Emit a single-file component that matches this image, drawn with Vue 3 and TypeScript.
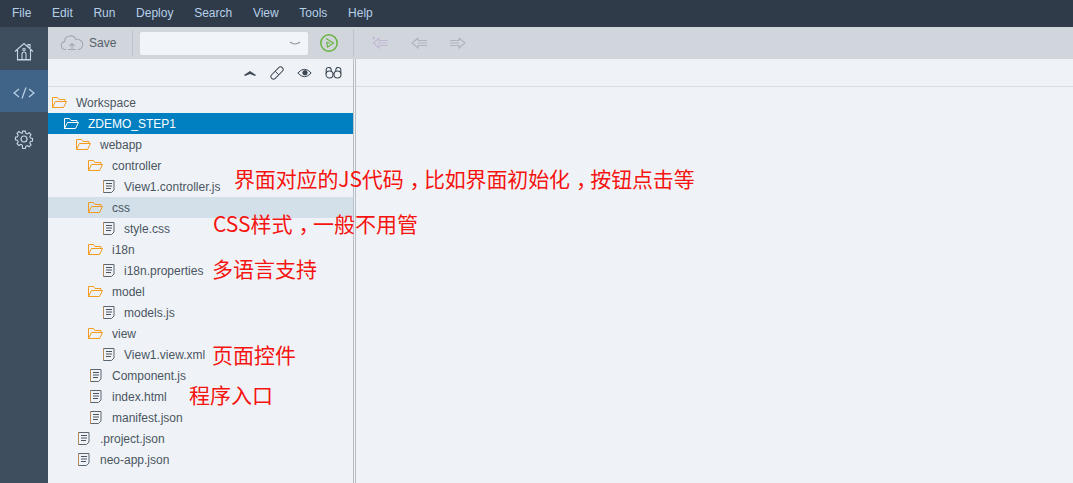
<script setup lang="ts">
interface Row { name: string; depth: number; folder: boolean; cls?: string }
interface Note { parts: string[]; x: number; y: number; cls?: string }
const menus: string[] = ['File', 'Edit', 'Run', 'Deploy', 'Search', 'View', 'Tools', 'Help']
const rows: Row[] = [
  { name: 'Workspace', depth: 0, folder: true },
  { name: 'ZDEMO_STEP1', depth: 1, folder: true, cls: 'selected' },
  { name: 'webapp', depth: 2, folder: true },
  { name: 'controller', depth: 3, folder: true },
  { name: 'View1.controller.js', depth: 4, folder: false },
  { name: 'css', depth: 3, folder: true, cls: 'hover' },
  { name: 'style.css', depth: 4, folder: false },
  { name: 'i18n', depth: 3, folder: true },
  { name: 'i18n.properties', depth: 4, folder: false },
  { name: 'model', depth: 3, folder: true },
  { name: 'models.js', depth: 4, folder: false },
  { name: 'view', depth: 3, folder: true },
  { name: 'View1.view.xml', depth: 4, folder: false },
  { name: 'Component.js', depth: 3, folder: false },
  { name: 'index.html', depth: 3, folder: false },
  { name: 'manifest.json', depth: 3, folder: false },
  { name: '.project.json', depth: 2, folder: false },
  { name: 'neo-app.json', depth: 2, folder: false },
]
const notes: Note[] = [
  { parts: ['界面对应的JS代码', '，', '比如界面初始化', '，', '按钮点击等'], x: 234, y: 164, cls: 'tight' },
  { parts: ['CSS样式', '，', '一般不用管'], x: 213, y: 209 },
  { parts: ['多语言支持'], x: 212, y: 254 },
  { parts: ['页面控件'], x: 212, y: 340 },
  { parts: ['程序入口'], x: 189, y: 380 },
]
</script>

<template>
  <div class="app">
    <header class="menubar">
      <span v-for="m in menus" :key="m" class="menu">{{ m }}</span>
    </header>
    <div class="body">
      <nav class="rail">
        <div class="rail-item home">
          <svg width="20" height="19" viewBox="0 0 20 19" fill="none" stroke="#c4d6e8" stroke-width="1.100">
            <path d="M1 9.500 10 1.500l9 8M14 5V2.500h2V7M3.500 8v10h13V8M3 17.500h14" />
            <path d="M8 17.500v-5.500a2 2 0 0 1 4 0v5.500" />
            <circle cx="10" cy="7.500" r="1.200" />
          </svg>
        </div>
        <div class="rail-item active">
          <svg width="22" height="12" viewBox="0 0 22 12" fill="none" stroke="#bcd3e8" stroke-width="1.200">
            <path d="M6 2 1 6l5 4M16 2l5 4-5 4M13 .5 9 11.500" />
          </svg>
        </div>
        <div class="rail-item gear">
          <svg width="20" height="20" viewBox="0 0 20 20" fill="none" stroke="#c4d6e8" stroke-width="1.200">
            <path d="M8.500 1.500h3l.5 2.400 1.700.7 2-1.300 2.100 2.100-1.300 2 .7 1.700 2.300.5v3l-2.300.5-.7 1.700 1.300 2-2.100 2.100-2-1.300-1.700.7-.5 2.400h-3L8 16.900l-1.700-.7-2 1.300-2.100-2.100 1.300-2-.7-1.700L.5 11.200v-3l2.300-.5.7-1.700-1.300-2 2.100-2.100 2 1.300L8 3.900z" transform="translate(1 .8) scale(.9)" />
            <circle cx="10" cy="10" r="3" />
          </svg>
        </div>
      </nav>
      <div class="main">
        <div class="toolbar">
          <div class="save">
            <svg width="24" height="16" viewBox="0 0 24 16" fill="none" stroke="#a3a9b0" stroke-width="1.100">
              <path d="M6 14.500H5a4 4 0 0 1-.5-7.900A6 6 0 0 1 16 4.500a4.500 4.500 0 0 1 3 10h-1M12 15V8.500M9.500 11 12 8.500l2.500 2.500M8 14.500h8" />
            </svg>
            <span>Save</span>
          </div>
          <div class="select">
            <svg width="12" height="5" viewBox="0 0 12 5" fill="none" stroke="#8c939a" stroke-width="1.100"><path d="M1 1q5 4 10 0" /></svg>
          </div>
          <svg class="run" width="20" height="20" viewBox="0 0 20 20" fill="none">
            <circle cx="10" cy="10" r="8.200" stroke="#6ab23f" stroke-width="1.500" />
            <path d="M7 5.500 14.500 10 8.500 14 7.800 9.500l3 .5" stroke="#6ab23f" stroke-width="1.100" />
          </svg>
          <div class="navs">
            <svg width="18" height="14" viewBox="0 0 18 14" fill="none" stroke="#c2b8d6" stroke-width="1.100">
              <path d="M8 2 2.500 7 8 12V9.500h9M8 2v2.500h9M7 7h9" /><path d="M1 2h3M2.500.5v3" />
            </svg>
            <svg width="18" height="14" viewBox="0 0 18 14" fill="none" stroke="#aeb5bd" stroke-width="1.100">
              <path d="M8 2 2 7l6 5V9.500h9M8 2v2.500h9M8 7h9" />
            </svg>
            <svg width="18" height="14" viewBox="0 0 18 14" fill="none" stroke="#aeb5bd" stroke-width="1.100">
              <path d="M10 2l6 5-6 5V9.500H1M10 2v2.500H1M1 7h9" />
            </svg>
          </div>
        </div>
        <div class="panes">
          <aside class="left">
            <div class="pane-head">
              <svg width="14" height="8" viewBox="0 0 14 8" fill="#3c4753"><path d="M1 6 7 2l6 4-1 1-5-2-5 2z" /></svg>
              <svg width="14" height="14" viewBox="0 0 14 14" fill="none" stroke="#3c4753" stroke-width="1">
                <rect x="-.5" y="4.500" width="15" height="5" rx="2.500" transform="rotate(-45 7 7)" />
                <path d="M5.200 5.200l3.600 3.600" />
              </svg>
              <svg width="15" height="12" viewBox="0 0 15 12" fill="none" stroke="#3c4753" stroke-width="1">
                <path d="M.8 6q6.700-7.500 13.400 0-6.700 7.500-13.400 0z" /><circle cx="8" cy="5.800" r="2.200" fill="#3c4753" />
              </svg>
              <svg width="17" height="12" viewBox="0 0 17 12" fill="none" stroke="#3c4753" stroke-width="1.100">
                <circle cx="4.500" cy="7.500" r="3.500" /><circle cx="12.500" cy="7.500" r="3.500" />
                <path d="M8 7h1M1.200 6.500V3.500a2.500 2.500 0 0 1 5-1v2M15.800 6.500V3.500a2.500 2.500 0 0 0-5-1v2" />
              </svg>
            </div>
            <ul class="tree">
              <li v-for="r in rows" :key="r.name" class="row" :class="[r.cls, 'd' + r.depth, r.folder ? 'is-folder' : 'is-file']">
                <svg v-if="r.folder" class="ico" width="17" height="13" viewBox="0 0 17 13" fill="none" stroke="currentColor" stroke-width="1">
                  <path d="M1.500 11.500V1.500h5l1.500 2h6v2M1.500 11.500h11l3-6H4.500l-3 6z" />
                </svg>
                <svg v-else class="ico" width="12" height="13" viewBox="0 0 12 13" fill="none">
                  <path d="M.5.500h10.500v9.500l-2.500 2.500H.5z" stroke="#5c6670" />
                  <path d="M.5.500v12" stroke="#b98b5a" />
                  <path d="M3 3.500h6M3 6h6M3 8.500h5" stroke="#4a545e" />
                </svg>
                <span class="label">{{ r.name }}</span>
              </li>
            </ul>
          </aside>
          <div class="splitter"></div>
          <section class="right"><div class="right-head"></div></section>
        </div>
      </div>
    </div>
    <span v-for="n in notes" :key="n.x" class="note" :class="n.cls" :style="{ left: n.x + 'px', top: n.y + 'px' }">
      <template v-for="(p, i) in n.parts" :key="i"><span v-if="p === '，'" class="comma">{{ p }}</span><template v-else>{{ p }}</template></template>
    </span>
  </div>
</template>

<style scoped>
.app {
  position: relative;
  width: 1073px;
  height: 483px;
  overflow: hidden;
  font-family: "Liberation Sans", Arial, sans-serif;
  font-size: 12px;
  color: #4b5560;
  background: #eff3f8;
}
.menubar {
  height: 27px;
  background: #2f3b49;
  display: flex;
  align-items: center;
  padding-left: 12px;
  gap: 20.7px;
}
.menu { color: #b6d0ea; line-height: 27px; }
.body { display: flex; height: 456px; }
.rail { width: 48px; flex: none; background: #3e4e5e; display: flex; flex-direction: column; }
.rail-item { display: flex; align-items: center; justify-content: center; box-sizing: border-box; }
.rail-item.home { height: 43px; padding-top: 5px; }
.rail-item.active { height: 42px; padding-top: 3px; background: #3f6487; }
.rail-item.gear { height: 53px; }
.main { flex: 1; display: flex; flex-direction: column; min-width: 0; }
.toolbar {
  height: 32px;
  flex: none;
  background: #d1d6dc;
  display: flex;
  align-items: center;
}
.save {
  width: 85px;
  height: 26px;
  padding-left: 12px;
  box-sizing: border-box;
  display: flex;
  align-items: center;
  gap: 5px;
  color: #56606a;
  border-right: 1px solid #bcc2c9;
}
.select {
  width: 168px;
  height: 23px;
  margin-left: 7px;
  background: #f1f4f8;
  border-radius: 2px;
  display: flex;
  align-items: center;
  justify-content: flex-end;
  padding-right: 7px;
  box-sizing: border-box;
}
.run { margin-left: 11px; }
.navs {
  margin-left: 14px;
  height: 28px;
  padding-left: 17px;
  border-left: 1px solid #bcc2c9;
  display: flex;
  align-items: center;
  gap: 21px;
}
.panes { flex: 1; display: flex; min-height: 0; }
.left { width: 305px; flex: none; }
.pane-head {
  height: 28px;
  box-sizing: border-box;
  border-bottom: 1px solid #d9dde2;
  display: flex;
  align-items: center;
  justify-content: flex-end;
  gap: 13px;
  padding-right: 11px;
}
.tree { list-style: none; margin: 5px 0 0; padding: 0; }
.row { height: 21px; display: flex; align-items: center; position: relative; white-space: nowrap; }
.row .ico { flex: none; }
.is-folder .ico { color: #f39c1f; }
.is-folder .label { margin-left: 8px; }
.is-file .ico { margin-right: 10px; }
.is-folder.d0 { padding-left: 3px; }
.is-folder.d1 { padding-left: 15px; }
.is-folder.d2 { padding-left: 27px; }
.is-folder.d3 { padding-left: 39px; }
.is-file.d2 { padding-left: 30px; }
.is-file.d3 { padding-left: 42px; }
.is-file.d4 { padding-left: 55px; }
.is-file.d4 .ico { margin-right: 9px; }
.selected { background: #0080c0; color: #fff; }
.selected .ico { color: #fff; }
.hover { background: #d3e0ea; }
.splitter {
  width: 1px;
  flex: none;
  background: #eff3f8;
  border-left: 1px solid #b9bfc6;
  border-right: 1px solid #b9bfc6;
}
.right { flex: 1; }
.right-head { height: 28px; box-sizing: border-box; border-bottom: 1px solid #d9dde2; }
.note {
  position: absolute;
  font-family: "Noto Sans CJK SC", sans-serif;
  font-size: 21px;
  line-height: 28px;
  color: #f5140f;
  white-space: nowrap;
}
.note.tight { letter-spacing: -0.14px; }
.comma { font-feature-settings: "halt"; padding: 0 4px 0 6px; }
</style>
